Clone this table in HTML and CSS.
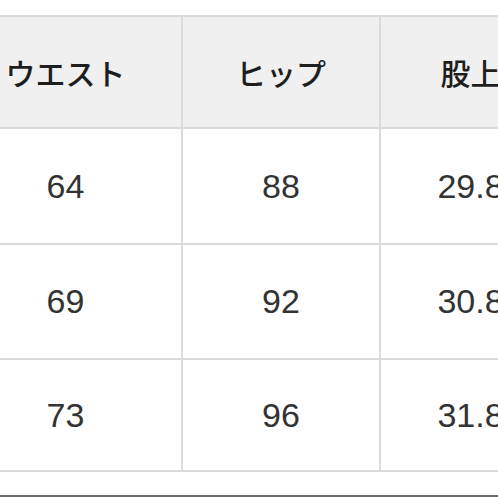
FILE: index.html
```html
<!DOCTYPE html>
<html lang="ja">
<head>
<meta charset="utf-8">
<link rel="stylesheet" href="styles.css">
</head>
<body>
<div class="page">
  <table class="size-table">
    <colgroup>
      <col class="c1"><col class="c2"><col class="c3">
    </colgroup>
    <thead>
      <tr class="head"><th>ウエスト</th><th>ヒップ</th><th>股上</th></tr>
    </thead>
    <tbody>
      <tr class="r1"><td>64</td><td>88</td><td>29.8</td></tr>
      <tr class="r2"><td>69</td><td>92</td><td>30.8</td></tr>
      <tr class="r3"><td>73</td><td>96</td><td>31.8</td></tr>
    </tbody>
  </table>
  <div class="gap"></div>
  <div class="rule"></div>
</div>
</body>
</html>
```
FILE: styles.css
```css
html, body {
  margin: 0;
  padding: 0;
  background: #ffffff;
  overflow: hidden;
}
.page {
  width: 498px;
  height: 498px;
  padding-top: 15px;
  box-sizing: border-box;
  overflow: hidden;
}
.size-table {
  border-collapse: collapse;
  table-layout: fixed;
  width: 612px;
  margin-left: -52px;
  font-family: "Liberation Sans", "Noto Sans CJK JP", sans-serif;
  color: #2b2b2b;
}
.c1 { width: 233px; }
.c2 { width: 198px; }
.c3 { width: 181px; }
.size-table th,
.size-table td {
  border: 2px solid #dadada;
  text-align: center;
  vertical-align: middle;
  padding: 0;
}
.size-table th {
  background: #f0f0f0;
  font-family: "Noto Sans CJK JP", sans-serif;
  font-weight: 500;
  font-size: 30px;
  color: #1e1e1e;
}
.size-table td {
  background: #ffffff;
  font-size: 34px;
  font-weight: 400;
  color: #333;
}
.head { height: 112px; }
.r1 { height: 116px; }
.r2 { height: 115px; }
.r3 { height: 112px; }
.gap { height: 23px; }
.rule {
  height: 2px;
  background: #6a6a6a;
}
```
